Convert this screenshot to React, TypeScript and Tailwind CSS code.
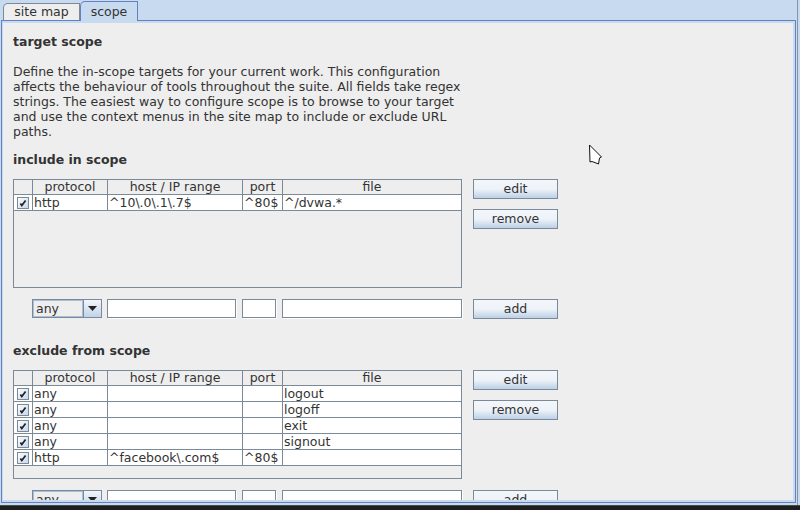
import React from "react";

const cols = ["w-[19px] border-r", "w-[75px] border-r", "w-[135px] border-r", "w-[40px] border-r", "flex-1"];

function Check() {
  return (
    <svg width="12" height="12" viewBox="0 0 12 12" className="block">
      <defs>
        <linearGradient id="cb" x1="0" y1="0" x2="1" y2="1">
          <stop offset="0" stopColor="#ffffff" />
          <stop offset="1" stopColor="#c4d6ea" />
        </linearGradient>
      </defs>
      <rect x="0.5" y="0.5" width="11" height="11" fill="url(#cb)" stroke="#7a8a99" />
      <path d="M3.4 6.6 L4.8 8.6 L8.6 3.6" fill="none" stroke="#222" strokeWidth="1.7" />
    </svg>
  );
}

function HeaderRow() {
  const labels = ["", "protocol", "host / IP range", "port", "file"];
  return (
    <div className="flex h-[15px] border-b border-[#7a8a99] bg-[#eeeeee]">
      {labels.map((l, i) => (
        <div key={i} className={`${cols[i]} border-[#7a8a99] text-center leading-[14px] whitespace-nowrap overflow-hidden`}>
          {l}
        </div>
      ))}
    </div>
  );
}

function DataRow({ cells }: { cells: string[] }) {
  return (
    <div className="flex h-[16px] border-b border-[#7a8a99] bg-white">
      <div className={`${cols[0]} border-[#7a8a99] flex items-center justify-center`}>
        <Check />
      </div>
      {cells.map((c, i) => (
        <div key={i} className={`${cols[i + 1]} border-[#7a8a99] pl-[1px] leading-[15px] whitespace-nowrap overflow-hidden`}>
          {c}
        </div>
      ))}
    </div>
  );
}

function Btn({ label }: { label: string }) {
  return (
    <div className="w-[85px] h-[20px] border border-[#7a8a99] bg-linear-to-b from-[#f3f6fa] via-[#eef3f9] to-[#bcd0e6] flex items-center justify-center leading-none">
      {label}
    </div>
  );
}

function Section({ rows }: { rows: string[][] }) {
  return (
    <div className="flex items-start">
      <div className="w-[449px] h-[109px] border border-[#7a8a99] bg-[#eeeeee] overflow-hidden">
        <HeaderRow />
        {rows.map((r, i) => (
          <DataRow key={i} cells={r} />
        ))}
      </div>
      <div className="ml-[11px] flex flex-col gap-[10px]">
        <Btn label="edit" />
        <Btn label="remove" />
      </div>
    </div>
  );
}

function Field({ w }: { w: string }) {
  return <div className={`${w} h-[19px] bg-white border border-[#7a8a99] shadow-[1px_1px_0_#ffffff]`} />;
}

function AddRow() {
  return (
    <div className="flex items-start pl-[19px]">
      <div className="w-[70px] h-[19px] flex border border-[#7a8a99] bg-[#eeeeee]">
        <div className="w-[50px] border border-[#a9c0db] pl-[2px] leading-[15px]">any</div>
        <div className="flex-1 border-l border-[#7a8a99] bg-linear-to-b from-[#f3f6fa] to-[#c0d3e8] flex items-center justify-center">
          <svg width="9" height="5" viewBox="0 0 9 5">
            <path d="M0 0 H9 L4.5 5 Z" fill="#222" />
          </svg>
        </div>
      </div>
      <div className="ml-[5px]">
        <Field w="w-[129px]" />
      </div>
      <div className="ml-[6px]">
        <Field w="w-[34px]" />
      </div>
      <div className="ml-[6px]">
        <Field w="w-[180px]" />
      </div>
      <div className="ml-[11px]">
        <Btn label="add" />
      </div>
    </div>
  );
}

export default function App() {
  const intro = [
    "Define the in-scope targets for your current work. This configuration",
    "affects the behaviour of tools throughout the suite. All fields take regex",
    "strings. The easiest way to configure scope is to browse to your target",
    "and use the context menus in the site map to include or exclude URL",
    "paths.",
  ];

  return (
    <div className="w-[800px] h-[510px] overflow-hidden bg-[#c8daf0] flex flex-col relative font-['DejaVu_Sans',sans-serif] text-[12.5px] text-[#333333]">
      <div className="flex-1 flex flex-col w-[798px] border-r border-[#8595a6] min-h-0">
        {/* Tabs */}
        <div className="h-[20px] flex items-end pl-[3px] shrink-0">
          <div className="w-[77px] h-[17px] border border-b-0 border-[#7a8a99] rounded-tl-[5px] bg-[#eeeeee] text-center leading-[16px]">
            site map
          </div>
          <div className="relative z-10 -mb-[1px] w-[58px] h-[20px] border border-b-0 border-[#6382bf] rounded-tl-[5px] bg-[#c8daf0] text-center leading-[19px]">
            scope
          </div>
        </div>

        {/* Tab content */}
        <div className="flex-1 min-h-0 ml-[1px] mr-[1px] mb-[2px] border border-[#6382bf] bg-[#c8daf0] pt-[2px] pl-[1px] pr-[2px] pb-[2px] flex">
          <div className="flex-1 bg-[#eeeeee] overflow-hidden pl-[10px] pt-[11px]">
            <div className="font-bold leading-[15px]">target scope</div>

            <div className="mt-[15px] leading-[15px]">
              {intro.map((l, i) => (
                <div key={i} className="whitespace-nowrap">
                  {l}
                </div>
              ))}
            </div>

            <div className="mt-[13px] font-bold leading-[15px]">include in scope</div>
            <div className="mt-[12px]">
              <Section rows={[["http", "^10\\.0\\.1\\.7$", "^80$", "^/dvwa.*"]]} />
            </div>
            <div className="mt-[11px]">
              <AddRow />
            </div>

            <div className="mt-[24px] font-bold leading-[15px]">exclude from scope</div>
            <div className="mt-[12px]">
              <Section
                rows={[
                  ["any", "", "", "logout"],
                  ["any", "", "", "logoff"],
                  ["any", "", "", "exit"],
                  ["any", "", "", "signout"],
                  ["http", "^facebook\\.com$", "^80$", ""],
                ]}
              />
            </div>
            <div className="mt-[11px]">
              <AddRow />
            </div>
          </div>
        </div>
      </div>
      <div className="h-[5px] shrink-0 bg-[#1e1e1e] border-t border-[#4a4a4a]" />

      {/* mouse pointer */}
      <svg className="absolute left-[588px] top-[144px]" width="16" height="22" viewBox="0 0 16 22">
        <path d="M1.5 1 L13.5 13 L11.5 14 L10.5 20 L8 19 L4 17.5 L2 18 Z" fill="#ffffff" stroke="#111" strokeWidth="1" strokeLinejoin="round" />
      </svg>
    </div>
  );
}
